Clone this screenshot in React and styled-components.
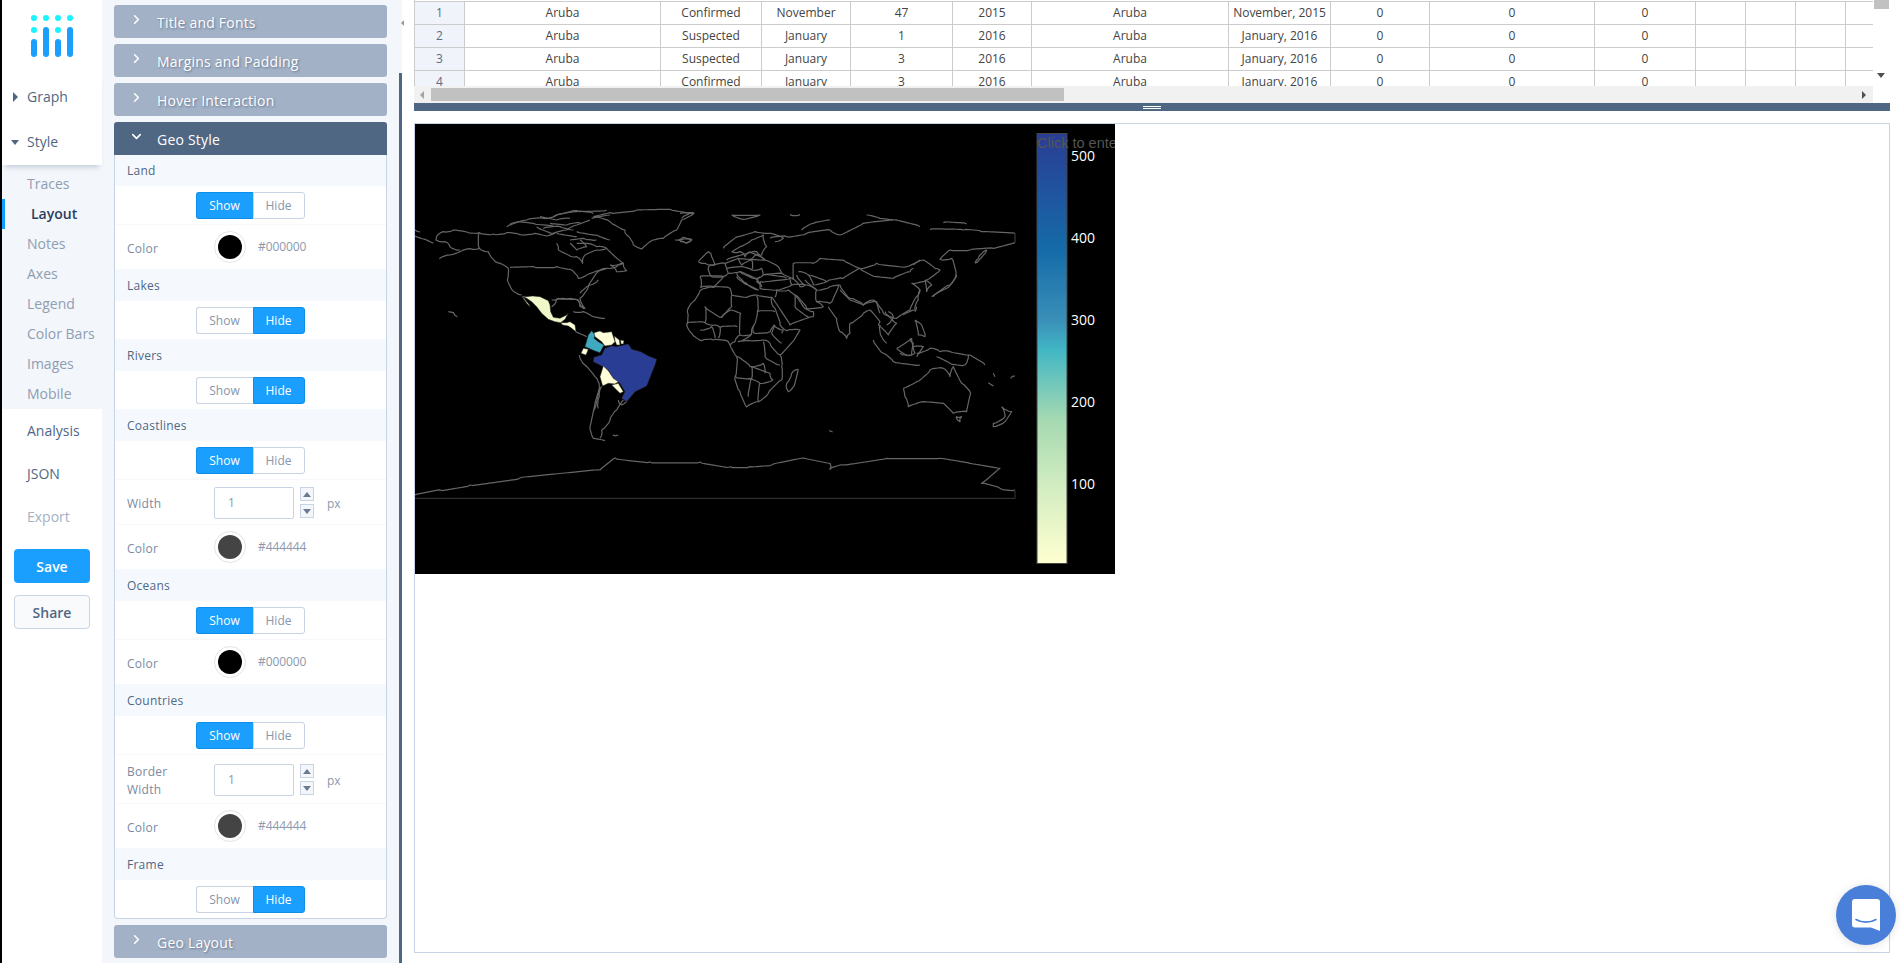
import styled, { createGlobalStyle } from "styled-components";
import { ChevronRight, ChevronDown } from "lucide-react";

const GlobalStyle = createGlobalStyle`
  html, body {
    margin: 0;
    padding: 0;
    background: #000;
    overflow: hidden;
  }
  * {
    box-sizing: border-box;
  }
`;

const Page = styled.div`
  display: flex;
  width: 1902px;
  height: 963px;
  margin-left: 2px;
  background: #fff;
  font-family: "Open Sans", sans-serif;
  overflow: hidden;
`;

/* left nav */
const Nav = styled.nav`
  width: 100px;
  flex: none;
  background: #fff;
`;
const LogoBox = styled.div`
  height: 74px;
  padding: 15px 0 0 29px;
`;
const NavTop = styled.div`
  height: 91px;
  background: #fff;
  box-shadow: 0 5px 5px -3px rgba(80, 103, 132, 0.3);
  position: relative;
`;
const NavItem = styled.div`
  height: ${(props) => props.$h || 43}px;
  display: flex;
  align-items: center;
  padding-left: 25px;
  font-size: 14px;
  color: ${(props) => (props.$muted ? "#a2b1c6" : "#506784")};
  position: relative;
`;
const Caret = styled.span`
  position: absolute;
  left: ${(props) => (props.$open ? 9 : 11)}px;
  top: 50%;
  margin-top: -5px;
  width: 0;
  height: 0;
  ${(props) =>
    props.$open
      ? `border-left: 4.5px solid transparent; border-right: 4.5px solid transparent; border-top: 5px solid #506784; margin-top: -2px;`
      : `border-top: 5px solid transparent; border-bottom: 5px solid transparent; border-left: 5px solid #506784;`}
`;
const SubNav = styled.div`
  background: #f3f6fa;
  height: 244px;
  padding-top: 4px;
`;
const SubItem = styled.div`
  height: 30px;
  display: flex;
  align-items: center;
  padding-bottom: 2px;
  font-size: 14px;
  padding-left: ${(props) => (props.$active ? 26 : 25)}px;
  color: ${(props) => (props.$active ? "#2a3f5f" : "#8f9db3")};
  font-weight: ${(props) => (props.$active ? 600 : 400)};
  border-left: ${(props) => (props.$active ? "3px solid #119dff" : "none")};
`;
const NavButton = styled.div`
  width: 76px;
  height: 34px;
  margin: ${(props) => props.$mt}px 0 0 12px;
  display: flex;
  align-items: center;
  justify-content: center;
  font-size: 14px;
  font-weight: 600;
  border-radius: 4px;
  background: ${(props) => (props.$primary ? "#1a9fff" : "#f8fafc")};
  color: ${(props) => (props.$primary ? "#fff" : "#506784")};
  border: ${(props) => (props.$primary ? "none" : "1px solid #c8d4e3")};
`;

/* style panel */
const PanelWrap = styled.div`
  width: 300px;
  flex: none;
  display: flex;
  background: #f3f6fa;
`;
const Panel = styled.div`
  width: 297px;
  padding: 5px 12px 0 12px;
  display: flex;
  flex-direction: column;
  gap: 6px;
`;
const PanelScroll = styled.div`
  width: 3px;
  margin-top: 73px;
  background: #506784;
`;
const FoldHead = styled.div`
  height: 33px;
  display: flex;
  align-items: center;
  padding: 2px 0 0 15px;
  gap: 13px;
  font-size: 14px;
  letter-spacing: 0.2px;
  color: #fff;
  background: ${(props) => (props.$open ? "#506784" : "#a2b1c6")};
  border-radius: ${(props) => (props.$open ? "3px 3px 0 0" : "3px")};
  text-shadow: ${(props) =>
    props.$open ? "none" : "1px 1px 2px rgba(42, 63, 95, 0.5)"};
  svg {
    margin-top: -6px;
    flex: none;
  }
`;
const FoldBody = styled.div`
  margin-top: -6px;
  background: #fff;
  border: 1px solid #c8d4e3;
  border-top: none;
  border-radius: 0 0 4px 4px;
  height: 764px;
  overflow: hidden;
`;
const SectionHead = styled.div`
  height: 31px;
  background: #f5f9fe;
  display: flex;
  align-items: center;
  padding: 0 0 1px 12px;
  font-size: 12px;
  letter-spacing: 0.25px;
  color: #506784;
`;
const RadioRow = styled.div`
  height: 39px;
  padding-top: 6px;
  display: flex;
  justify-content: center;
  padding-right: 1px;
  border-bottom: 1px solid #f6f8fb;
`;
const RadioBtn = styled.div`
  width: ${(props) => (props.$left ? 57 : 52)}px;
  height: 27px;
  display: flex;
  align-items: center;
  justify-content: center;
  font-size: 12px;
  background: ${(props) => (props.$on ? "#1a9fff" : "#fff")};
  color: ${(props) => (props.$on ? "#fff" : "#8796ab")};
  border: 1px solid ${(props) => (props.$on ? "#0d8fe8" : "#c8d4e3")};
  border-radius: ${(props) => (props.$left ? "3px 0 0 3px" : "0 3px 3px 0")};
  ${(props) => (props.$left ? "border-right: none;" : "")}
`;
const PropRow = styled.div`
  height: ${(props) => props.$h || 45}px;
  display: flex;
  align-items: center;
  padding: 3px 0 0 12px;
  border-bottom: 1px solid #f6f8fb;
`;
const PropLabel = styled.div`
  width: 87px;
  padding-right: 30px;
  font-size: 12px;
  line-height: 18px;
  letter-spacing: 0.25px;
  color: #7b8aa0;
  flex: none;
`;
const Swatch = styled.div`
  width: 32px;
  height: 32px;
  border-radius: 50%;
  background: #fff;
  border: 1px solid #e4e4e4;
  padding: 3px;
  margin-top: -3px;
  span {
    display: block;
    width: 24px;
    height: 24px;
    border-radius: 50%;
    background: ${(props) => props.$color};
  }
`;
const Hex = styled.div`
  margin: -4px 0 0 12px;
  font-size: 12px;
  color: #8c99ad;
  letter-spacing: -0.1px;
`;
const NumBox = styled.div`
  width: 80px;
  height: 32px;
  border: 1px solid #c8d4e3;
  border-radius: 2px;
  display: flex;
  align-items: center;
  margin-top: -2px;
  padding-left: 13px;
  font-size: 12px;
  color: #8c99ad;
`;
const Spinner = styled.div`
  margin: -2px 0 0 6px;
  display: flex;
  flex-direction: column;
  gap: 3px;
`;
const SpinBtn = styled.div`
  width: 14px;
  height: 14px;
  border: 1px solid #c8d4e3;
  background: #f3f6fa;
  display: flex;
  align-items: center;
  justify-content: center;
  &::after {
    content: "";
    border-left: 4.5px solid transparent;
    border-right: 4.5px solid transparent;
    ${(props) =>
      props.$up
        ? "border-bottom: 5px solid #6b7a8e;"
        : "border-top: 5px solid #6b7a8e;"}
  }
`;
const Unit = styled.div`
  margin-left: 13px;
  font-size: 12px;
  color: #8c99ad;
`;

/* right side */
const Main = styled.main`
  width: 1488px;
  flex: none;
  padding-left: 12px;
  display: flex;
  flex-direction: column;
  position: relative;
`;
const CollapseArrow = styled.span`
  position: absolute;
  left: -1px;
  top: 20px;
  border-top: 3px solid transparent;
  border-bottom: 3px solid transparent;
  border-right: 3px solid #999;
`;
const GridWrap = styled.div`
  height: 103px;
  display: flex;
  flex: none;
`;
const GridLeft = styled.div`
  width: 1459px;
  display: flex;
  flex-direction: column;
`;
const Cells = styled.div`
  height: 86px;
  overflow: hidden;
  padding-top: 1px;
  border-left: 1px solid #ccc;
`;
const Row = styled.div`
  display: grid;
  grid-template-columns: 50px 196px 101px 89px 102px 79px 197px 102px 99px 165px 101px 50px 50px 50px 50px;
  height: 23px;
  width: 1482px;
  border-top: 1px solid #ccc;
`;
const Cell = styled.div`
  display: flex;
  align-items: center;
  justify-content: center;
  font-size: 12px;
  line-height: 22px;
  border-right: 1px solid #ccc;
  white-space: nowrap;
  background: ${(props) => (props.$head ? "#f0f4fa" : "#fff")};
  color: ${(props) => (props.$head ? "#5a6b82" : "#444")};
`;
const HScroll = styled.div`
  height: 17px;
  background: #f1f1f1;
  position: relative;
`;
const HThumb = styled.div`
  position: absolute;
  left: 17px;
  top: 2px;
  width: 633px;
  height: 13px;
  background: #c1c1c1;
`;
const ScrollArrow = styled.span`
  position: absolute;
  top: 5px;
  border-top: 4px solid transparent;
  border-bottom: 4px solid transparent;
  ${(props) =>
    props.$right
      ? "right: 7px; border-left: 4px solid #505050;"
      : "left: 6px; border-right: 4px solid #a3a3a3;"}
`;
const VScroll = styled.div`
  width: 17px;
  height: 86px;
  background: #fff;
  position: relative;
`;
const VThumb = styled.div`
  width: 15px;
  height: 9px;
  margin-left: 1px;
  background: #c1c1c1;
`;
const VArrow = styled.span`
  position: absolute;
  left: 4px;
  top: 73px;
  border-left: 4px solid transparent;
  border-right: 4px solid transparent;
  border-top: 5px solid #505050;
`;
const Splitter = styled.div`
  height: 8px;
  width: 1476px;
  flex: none;
  background: #506784;
  display: flex;
  flex-direction: column;
  align-items: center;
  justify-content: center;
  gap: 1px;
  span {
    width: 18px;
    height: 1px;
    background: #fff;
  }
`;
const PlotFrame = styled.div`
  width: 1476px;
  height: 830px;
  margin-top: 12px;
  border: 1px solid #c8d4e3;
`;
const MapSvg = styled.svg`
  display: block;
  width: 700px;
  height: 450px;
  background: #000;
`;
const Chat = styled.div`
  position: fixed;
  left: 1836px;
  top: 885px;
  width: 60px;
  height: 60px;
  border-radius: 50%;
  background: #4a7fd9;
  box-shadow: 0 1px 10px rgba(0, 0, 0, 0.12);
  display: flex;
  align-items: center;
  justify-content: center;
`;

const rows = [
  ["1", "Aruba", "Confirmed", "November", "47", "2015", "Aruba", "November, 2015"],
  ["2", "Aruba", "Suspected", "January", "1", "2016", "Aruba", "January, 2016"],
  ["3", "Aruba", "Suspected", "January", "3", "2016", "Aruba", "January, 2016"],
  ["4", "Aruba", "Confirmed", "January", "3", "2016", "Aruba", "January, 2016"],
];

// coastlines are traced by hand, roughen() gives them the jagged low-res look
const roughen = (points) => {
  const pts = points.split(" ").map((p) => p.split(",").map(Number));
  const out = [pts[0]];
  for (let i = 1; i < pts.length; i++) {
    const [ax, ay] = pts[i - 1];
    const [bx, by] = pts[i];
    const len = Math.hypot(bx - ax, by - ay);
    const steps = Math.max(1, Math.floor(len / 7));
    for (let s = 1; s <= steps; s++) {
      const t = s / steps;
      const noise = s === steps ? 0 : Math.sin(ax * 12.9 + ay * 78.2 + s * 37.7) * 3;
      out.push([
        ax + (bx - ax) * t + (noise * (by - ay)) / len,
        ay + (by - ay) * t - (noise * (bx - ax)) / len,
      ]);
    }
  }
  return out.map(([x, y]) => `${x.toFixed(1)},${y.toFixed(1)}`).join(" ");
};

// americas and greenland
const westLines = [
  "80,108 100,95 130,90 170,96 208,98 250,102 290,98 330,104 375,100 410,108 440,96",
  "208,98 208,145",
  "88,176 120,165 150,155 180,146 208,145 235,155 250,178 270,190 295,205",
  "80,108 78,120 105,125 120,140 150,150",
  "295,205 292,240 305,268 335,285",
  "300,202 370,200 440,200 480,208 505,235 530,225 565,212 590,205",
  "445,150 475,165 500,170 518,190 525,165 560,150 590,145 610,165 640,190 620,200 590,205 565,215 535,260 510,295 525,325 510,320 500,298 460,295 440,298 425,320",
  "440,130 445,150",
  "500,130 530,130 560,140 590,145",
  "290,80 330,65 370,70 430,75",
  "300,72 350,60 400,55 440,45 500,35 550,40",
  "430,50 500,32 590,30",
  "380,80 430,100 470,90 500,75 540,60",
  "480,120 520,115 560,120",
  "500,95 560,105 600,120",
  "545,55 600,45",
  "440,100 500,110",
  "390,50 440,60 480,55",
  "420,70 470,75 510,68",
  "400,85 450,80 490,90",
  "480,130 500,150 530,140 510,120",
  "600,195 640,190 650,212 620,215 600,195",
  "550,50 600,38 680,30 780,28 852,40 815,60 800,90 760,115 720,125 695,147 670,135 650,105 645,90 600,65 550,50",
  "795,120 820,112 845,120 825,128 795,120",
  "15,90 30,96",
  "15,108 45,118 70,130",
  "115,335 130,338 142,350",
  "497,395 520,405 530,410",
  "625,600 635,615 650,605",
  "570,560 555,610 540,680 550,715 585,722",
  "640,600 620,630 600,660 575,690 570,715",
  "608,705 625,705",
  "15,885 90,870 180,855 330,834 570,810 615,774 720,786 870,786 960,801",
];

const latinLines = [
  "95,60 115,55 150,55 175,60 180,75 190,85 195,85",
  "180,40 210,15 235,0",
  "160,95 190,95 215,108 255,115",
  "178,225 195,255 225,290 238,320 232,350 222,390",
  "245,320 238,350 235,385",
];

const filled = [
  ["#f0f7c8", "5,48 18,50 38,48 60,50 85,62 90,75 92,95 100,112 120,115 140,105 145,100 135,118 122,128 105,125 85,118 65,100 50,80 35,65 20,55"],
  ["#f0f7c8", "5,48 20,70 30,80 28,75 12,55"],
  ["#ffffd9", "122,128 140,128 150,125 165,135 168,155 155,145 145,138 128,135"],
  ["#3fa9c0", "215,152 225,165 222,175 235,185 252,195 240,218 225,213 195,200 205,165"],
  ["#ffffd9", "222,158 240,153 250,158 275,155 280,170 285,185 275,195 255,198 245,185 225,170"],
  ["#ffffd9", "283,168 298,180 300,195 290,195 285,182"],
  ["#ffffd9", "302,180 312,182 310,192 303,192"],
  ["#ffffd9", "190,205 205,208 198,225 183,220"],
  ["#2a3d94", "255,205 275,198 290,200 325,192 335,208 362,215 385,228 410,238 405,255 395,280 380,318 345,335 320,365 305,355 315,335 300,310 280,295 265,270 240,255 220,245 222,232 245,225"],
  ["#ffffd9", "250,258 265,272 280,295 295,305 285,312 265,310 248,318 240,290"],
  ["#ffffd9", "275,315 295,310 310,335 300,340"],
];

// africa, europe, middle east, central and south asia
const midLines = [
  "60,242 40,275 22,305 20,345 35,370 65,392 100,390 145,395 150,405 170,440 165,500 180,545 200,591 235,575 265,550 305,510 305,470 300,435 345,385 360,360 320,362 300,345 280,290 275,262 230,255 200,262 155,255 150,235 100,232 60,242",
  "230,258 232,305 285,305",
  "155,255 155,290 125,322 75,290 75,338 20,340",
  "125,322 155,300 182,310 180,375 215,372 222,345 232,305",
  "222,345 220,368 270,365 285,345",
  "75,338 105,345 120,352 172,350",
  "120,352 115,385",
  "60,360 95,350 105,385",
  "180,375 165,395 150,405",
  "215,372 175,395 210,392 250,390 270,400 300,435",
  "250,395 255,440 300,465",
  "170,440 210,470 250,460 255,490",
  "165,500 215,505 205,560",
  "215,505 215,470 270,490 278,510 240,520 205,505",
  "240,520 235,575",
  "280,345 310,360 305,370",
  "285,345 275,370 305,400",
  "355,478 345,520 325,545 320,520 335,490 355,478",
  "275,262 330,345 400,320 400,305 370,290 345,255 325,240 290,240 285,262",
  "345,255 345,290 385,320",
  "60,200 130,200 100,230 62,232 60,200",
  "85,170 135,160 145,190 130,200 95,200 85,170",
  "55,155 85,125 95,140 105,165 75,160 55,155",
  "130,115 175,80 225,65 265,70 310,85 285,95",
  "155,125 180,110 215,90 250,75 260,110 245,135 210,125 195,140 180,125 155,125",
  "135,160 175,145 255,150 295,170 305,190 250,195 225,205 180,185 145,190",
  "170,190 200,220 235,240 205,225 170,200",
  "180,185 225,205 245,230 230,215 240,200",
  "140,175 180,170 215,180 245,175 250,195",
  "175,145 185,165 215,150 215,180",
  "205,150 225,135 255,150",
  "240,215 330,205 335,225 290,240 240,235 240,215",
  "250,195 320,205",
  "140,150 230,125 255,150",
  "270,85 320,80 380,70 450,60 480,75 550,40 640,30 720,50",
  "365,60 400,40 450,30",
  "155,15 190,28 240,15 155,15",
  "330,14 360,14",
  "0,90 35,88 20,100 0,95",
  "0,10 40,8 5,25",
  "560,15 600,25 640,30",
  "305,190 340,205 340,160 400,160 420,145 490,150 540,175 590,160 680,170 720,150",
  "540,175 590,200 640,205 690,185 700,175",
  "335,205 360,230 375,225 350,195",
  "355,185 385,195 440,215 490,205 540,175",
  "385,195 400,225 440,215",
  "335,225 375,225 410,240 410,275 430,290 380,295 345,255",
  "375,210 410,240 450,230 480,225",
  "410,275 450,280 475,225",
  "445,290 470,325 480,365 500,385 510,370 510,340 550,310 570,300 600,335 595,345",
  "480,240 510,270 550,285 590,275 600,310",
  "480,225 510,265 550,285 580,270 610,310 650,325 690,300 710,260 720,240",
  "595,345 625,375 650,340 615,305",
  "620,345 640,320 625,305",
  "600,345 605,380 620,400",
  "580,390 610,430 640,455 720,465",
  "650,415 695,385 705,430 680,435 650,415",
];

// east asia, oceania, antarctica
const eastLines = [
  "600,88 700,90 755,95 855,100",
  "855,128 790,145 720,150 660,150 630,178 665,175 678,225 660,255 610,290",
  "550,195 580,180 615,205 630,210 590,240 545,250",
  "545,250 570,270 565,300 555,330 520,345",
  "555,360 570,370 585,410 565,405 555,360",
  "605,290 650,265 680,225",
  "585,240 605,255 590,275 585,240",
  "560,320 555,335",
  "735,190 770,150 745,175 735,190",
  "540,415 550,430 545,465 510,460",
  "550,440 580,440 560,470",
  "560,460 600,445 630,455 660,455 715,465 705,495 660,490 620,470",
  "715,465 765,495",
  "790,520 795,530",
  "775,548 790,558",
  "842,535 855,528",
  "520,565 560,545 600,510 640,505 660,530 670,500 695,550 722,580 710,635 670,640 640,610 580,605 535,620 525,590 520,565",
  "678,650 695,650 690,665 678,650",
  "815,620 845,635 825,665 790,680 790,670 825,650 815,620",
  "298,692 308,696",
  "0,800 60,800 125,795 225,775 300,790 300,808 340,795 470,775 630,775 720,790 810,805 775,835 755,850 810,865 855,870",
  "640,68 710,72",
];

const ticks = [
  ["500", 161],
  ["400", 243],
  ["300", 325],
  ["200", 407],
  ["100", 489],
];

function Coast({ x, y, lines, children }) {
  return (
    <g
      transform={`translate(${x} ${y}) scale(0.3333)`}
      fill="none"
      stroke="#666"
      strokeWidth="3.6"
      strokeLinejoin="round"
    >
      {lines.map((points) => (
        <polyline key={points} points={roughen(points)} />
      ))}
      {children}
    </g>
  );
}

function WorldMap() {
  return (
    <MapSvg viewBox="415 124 700 450">
      <defs>
        <linearGradient id="scale" x1="0" y1="1" x2="0" y2="0">
          <stop offset="0" stopColor="#ffffd0" />
          <stop offset="0.186" stopColor="#d0ecc0" />
          <stop offset="0.334" stopColor="#a5d9b1" />
          <stop offset="0.497" stopColor="#41b6c4" />
          <stop offset="0.566" stopColor="#3a8fb8" />
          <stop offset="0.729" stopColor="#156ba8" />
          <stop offset="1" stopColor="#2a3d94" />
        </linearGradient>
      </defs>
      <Coast x={410} y={200} lines={westLines} />
      <Coast x={680} y={210} lines={midLines} />
      <Coast x={730} y={200} lines={eastLines}>
        <polyline points="-950,895 855,895 855,870" stroke="#2e2e2e" />
        <polyline points="855,100 855,128" stroke="#3a3a3a" />
      </Coast>
      <Coast x={520} y={280} lines={latinLines}>
        {filled.map(([color, points]) => (
          <polygon
            key={points}
            points={points}
            fill={color}
            stroke="#262626"
            strokeWidth="1.5"
          />
        ))}
      </Coast>
      <rect
        x="1037"
        y="133.5"
        width="30"
        height="430"
        fill="url(#scale)"
        stroke="#444"
      />
      <text x="1037" y="148" fontFamily="Liberation Sans" fontSize="14.5" fill="#555">
        Click to enter
      </text>
      {ticks.map(([label, y]) => (
        <text
          key={label}
          x="1071"
          y={y}
          fontFamily="Open Sans"
          fontSize="14"
          fill="#fff"
        >
          {label}
        </text>
      ))}
    </MapSvg>
  );
}

function Toggle({ show }) {
  return (
    <RadioRow>
      <RadioBtn $left $on={show}>
        Show
      </RadioBtn>
      <RadioBtn $on={!show}>Hide</RadioBtn>
    </RadioRow>
  );
}

function ColorRow({ color, hex }) {
  return (
    <PropRow>
      <PropLabel>Color</PropLabel>
      <Swatch $color={color}>
        <span />
      </Swatch>
      <Hex>{hex}</Hex>
    </PropRow>
  );
}

function NumberRow({ label, h }) {
  return (
    <PropRow $h={h}>
      <PropLabel>{label}</PropLabel>
      <NumBox>1</NumBox>
      <Spinner>
        <SpinBtn $up />
        <SpinBtn />
      </Spinner>
      <Unit>px</Unit>
    </PropRow>
  );
}

function Fold({ title }) {
  return (
    <FoldHead>
      <ChevronRight size={15} strokeWidth={2.5} />
      {title}
    </FoldHead>
  );
}

function App() {
  return (
    <Page>
      <GlobalStyle />
      <Nav>
        <LogoBox>
          <svg width="44" height="44" viewBox="0 0 44 44">
            {[3, 15, 27, 39].map((x) => (
              <circle key={x} cx={x} cy="3" r="3" fill="#19f3ff" />
            ))}
            <circle cx="3" cy="15" r="3" fill="#19f3ff" />
            <circle cx="27" cy="15" r="3" fill="#19f3ff" />
            <rect x="0" y="24" width="6" height="18" rx="3" fill="#1a9fff" />
            <rect x="12" y="12" width="6" height="30" rx="3" fill="#1a9fff" />
            <rect x="24" y="24" width="6" height="18" rx="3" fill="#1a9fff" />
            <rect x="36" y="12" width="6" height="30" rx="3" fill="#1a9fff" />
          </svg>
        </LogoBox>
        <NavTop>
          <NavItem $h={45}>
            <Caret />
            Graph
          </NavItem>
          <NavItem $h={45}>
            <Caret $open />
            Style
          </NavItem>
        </NavTop>
        <SubNav>
          <SubItem>Traces</SubItem>
          <SubItem $active>Layout</SubItem>
          <SubItem>Notes</SubItem>
          <SubItem>Axes</SubItem>
          <SubItem>Legend</SubItem>
          <SubItem>Color Bars</SubItem>
          <SubItem>Images</SubItem>
          <SubItem>Mobile</SubItem>
        </SubNav>
        <NavItem $h={43}>Analysis</NavItem>
        <NavItem $h={43}>JSON</NavItem>
        <NavItem $h={43} $muted>
          Export
        </NavItem>
        <NavButton $primary $mt={11}>
          Save
        </NavButton>
        <NavButton $mt={12}>Share</NavButton>
      </Nav>

      <PanelWrap>
        <Panel>
          <Fold title="Title and Fonts" />
          <Fold title="Margins and Padding" />
          <Fold title="Hover Interaction" />
          <FoldHead $open>
            <ChevronDown size={15} strokeWidth={2.5} />
            Geo Style
          </FoldHead>
          <FoldBody>
            <SectionHead>Land</SectionHead>
            <Toggle show />
            <ColorRow color="#000" hex="#000000" />
            <SectionHead>Lakes</SectionHead>
            <Toggle />
            <SectionHead>Rivers</SectionHead>
            <Toggle />
            <SectionHead>Coastlines</SectionHead>
            <Toggle show />
            <NumberRow label="Width" />
            <ColorRow color="#444" hex="#444444" />
            <SectionHead>Oceans</SectionHead>
            <Toggle show />
            <ColorRow color="#000" hex="#000000" />
            <SectionHead>Countries</SectionHead>
            <Toggle show />
            <NumberRow label="Border Width" h={49} />
            <ColorRow color="#444" hex="#444444" />
            <SectionHead>Frame</SectionHead>
            <Toggle />
          </FoldBody>
          <Fold title="Geo Layout" />
        </Panel>
        <PanelScroll />
      </PanelWrap>

      <Main>
        <CollapseArrow />
        <GridWrap>
          <GridLeft>
            <Cells>
              {rows.map((row) => (
                <Row key={row[0]}>
                  <Cell $head>{row[0]}</Cell>
                  {row.slice(1).map((value, i) => (
                    <Cell key={i}>{value}</Cell>
                  ))}
                  <Cell>0</Cell>
                  <Cell>0</Cell>
                  <Cell>0</Cell>
                  <Cell />
                  <Cell />
                  <Cell />
                  <Cell />
                </Row>
              ))}
            </Cells>
            <HScroll>
              <ScrollArrow />
              <HThumb />
              <ScrollArrow $right />
            </HScroll>
          </GridLeft>
          <VScroll>
            <VThumb />
            <VArrow />
          </VScroll>
        </GridWrap>
        <Splitter>
          <span />
          <span />
        </Splitter>
        <PlotFrame>
          <WorldMap />
        </PlotFrame>
      </Main>

      <Chat>
        <svg width="28" height="32" viewBox="0 0 28 32">
          <path
            d="M3 0H25a3 3 0 0 1 3 3V32L19 28.5H3a3 3 0 0 1-3-3V3a3 3 0 0 1 3-3Z"
            fill="#fff"
          />
          <path
            d="M4 20.5C10 24 18 24 24 20.5"
            fill="none"
            stroke="#4a7fd9"
            strokeWidth="1.6"
            strokeLinecap="round"
          />
        </svg>
      </Chat>
    </Page>
  );
}

export default App;
